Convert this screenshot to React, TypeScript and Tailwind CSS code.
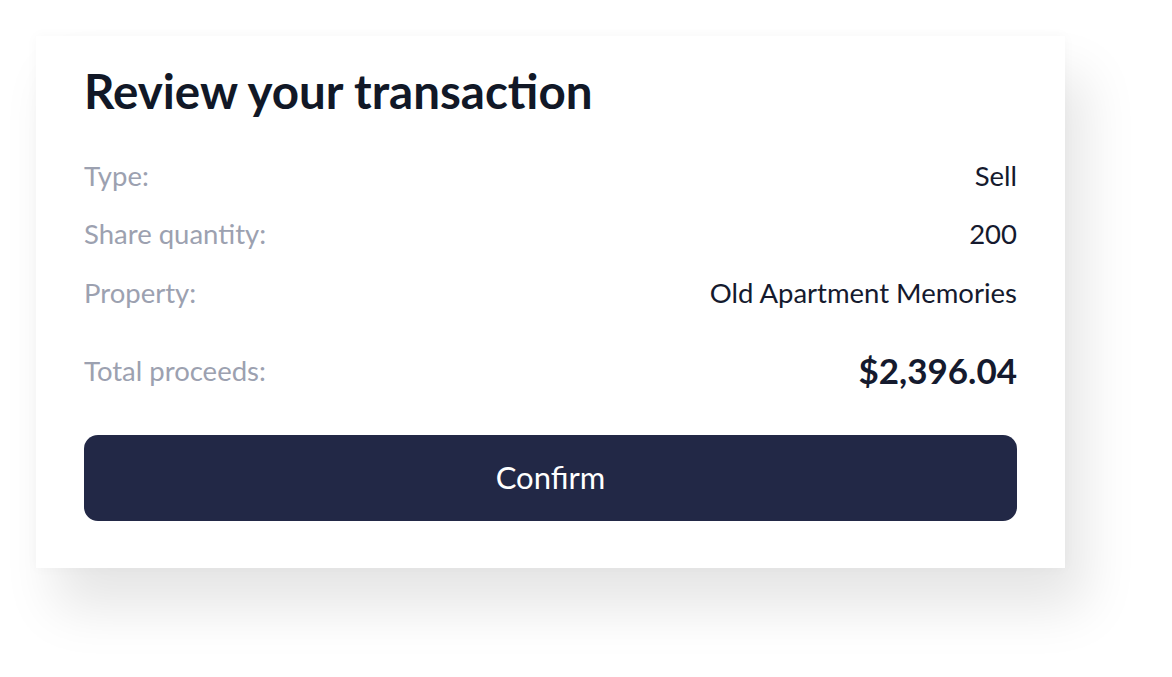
import React from 'react';

const rows = [
  { label: 'Type:', value: 'Sell' },
  { label: 'Share quantity:', value: '200' },
  { label: 'Property:', value: 'Old Apartment Memories' },
];

export default function App() {
  return (
    <div className="min-h-screen bg-white p-[36px] font-['Lato','Noto_Sans',sans-serif]">
      <div className="w-[1029px] h-[532px] bg-white px-[48px] pt-[27px] shadow-[0_0_12px_rgba(0,0,0,0.03),20px_40px_50px_rgba(0,0,0,0.10)]">
        <h1 className="text-[47.5px] leading-[56px] font-bold text-[#111827]">Review your transaction</h1>

        {/* details */}
        <div className="mt-[27px] flex flex-col">
          {rows.map(row => (
            <div key={row.label} className="flex items-center justify-between h-[58.5px] text-[27.5px]">
              <span className="text-[#9ca1b0]">{row.label}</span>
              <span className="text-[#151a2e]">{row.value}</span>
            </div>
          ))}
          <div className="flex items-center justify-between h-[60px] mt-[19px]">
            <span className="text-[27.5px] text-[#9ca1b0]">Total proceeds:</span>
            <span className="text-[35px] font-bold text-[#151a2e]">$2,396.04</span>
          </div>
        </div>

        <button className="mt-[34px] w-full h-[86px] rounded-[14px] bg-[#222846] text-white text-[31px]">
          Confirm
        </button>
      </div>
    </div>
  );
}
